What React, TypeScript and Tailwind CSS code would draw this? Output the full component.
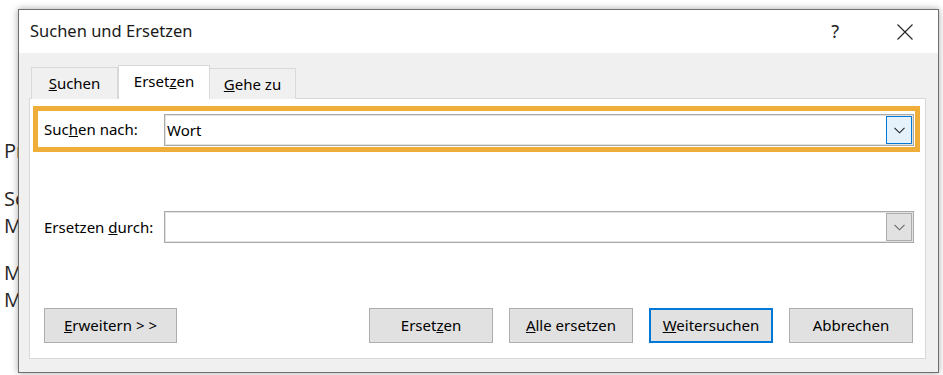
import React from "react"

const ui = { fontFamily: '"Noto Sans", "Open Sans", sans-serif' }

function Chevron({ color = "#333" }: { color?: string }) {
  return (
    <svg width="11" height="7" viewBox="0 0 11 7" fill="none">
      <path d="M0.5 0.8 L5.5 5.8 L10.5 0.8" stroke={color} strokeWidth="1.1" />
    </svg>
  )
}

function Combo({ value, active }: { value?: string; active?: boolean }) {
  return (
    <div className="flex h-[32px] w-[750px] items-center border border-[#a9a9a9] bg-white pl-[2px] pr-[1px] shadow-[inset_0_0_0_1px_#e3e3e3]">
      <span className="flex-1 text-[15px] text-black">{value}</span>
      <div
        className={
          active
            ? "flex h-[28px] w-[26px] items-center justify-center border border-[#0078d7] bg-[#e5f1fb]"
            : "flex h-[28px] w-[26px] items-center justify-center border border-[#adadad] bg-[#e1e1e1]"
        }
      >
        <Chevron color={active ? "#222" : "#666"} />
      </div>
    </div>
  )
}

function Btn({ children, w = "w-[124px]", primary }: { children: React.ReactNode; w?: string; primary?: boolean }) {
  return (
    <div
      className={
        "flex h-[35px] items-center justify-center bg-[#e1e1e1] text-[15px] text-black " +
        w +
        (primary ? " border-2 border-[#0078d7]" : " border border-[#adadad]")
      }
    >
      {children}
    </div>
  )
}

export default function App() {
  return (
    <div className="relative h-[375px] w-[943px] overflow-hidden bg-white">
      {/* document behind the dialog */}
      <div className="pl-[4px] pt-[137px] text-[20px] leading-[27px] text-[#262626]" style={{ fontFamily: '"Open Sans", sans-serif' }}>
        <p>Projektplanung für das nächste Quartal</p>
        <p className="mt-[21px]">Schreiben Sie hier Ihren Text</p>
        <p>Mit dem Wort können Sie suchen</p>
        <p className="mt-[20px]">Markieren Sie das Wort</p>
        <p>Mehr Text im Dokument</p>
      </div>

      {/* dialog window */}
      <div
        className="absolute left-[18px] top-[9px] flex h-[364px] w-[921px] flex-col border border-[#6f6f6f] bg-[#f0f0f0] shadow-[0_0_7px_rgba(0,0,0,0.35)]"
        style={ui}
      >
        <div className="flex h-[43px] items-center bg-white pl-[11px]">
          <span className="flex-1 text-[16.5px] text-[#1a1a1a]">Suchen und Ersetzen</span>
          <span className="mr-[58px] text-[18px] text-[#222]">?</span>
          <svg className="mr-[25px]" width="16" height="16" viewBox="0 0 16 16">
            <path d="M0.5 0.5 L15.5 15.5 M15.5 0.5 L0.5 15.5" stroke="#222" strokeWidth="1.1" />
          </svg>
        </div>

        <div className="flex flex-1 flex-col px-[10px] pt-[13px]">
          {/* tabs */}
          <div className="relative z-10 flex h-[33px] items-end pl-[2px] text-[15px] text-black">
            <div className="flex h-[32px] w-[87px] items-center justify-center border border-b-0 border-[#d9d9d9] bg-[#f0f0f0]">
              <span><u>S</u>uchen</span>
            </div>
            <div className="flex h-[34px] w-[92px] items-center justify-center border border-b-0 border-[#d9d9d9] bg-white pb-[2px]">
              <span>Erset<u>z</u>en</span>
            </div>
            <div className="flex h-[31px] w-[86px] items-center justify-center border border-b-0 border-l-0 border-[#d9d9d9] bg-[#f0f0f0]">
              <span><u>G</u>ehe zu</span>
            </div>
          </div>

          {/* panel */}
          <div className="-mt-px flex h-[261px] w-[897px] flex-col border border-[#d9d9d9] bg-white text-[15px] text-black">
            <div className="ml-[3px] mt-[7px] flex h-[46px] w-[887px] items-center border-[5px] border-[#efae3a] pl-[6px]">
              <span className="w-[120px] whitespace-nowrap">Suc<u>h</u>en nach:</span>
              <div className="pt-[2px]">
                <Combo value="Wort" active />
              </div>
            </div>

            <div className="ml-[8px] mt-[59px] flex items-center pl-[6px]">
              <span className="w-[120px] whitespace-nowrap">Ersetzen <u>d</u>urch:</span>
              <Combo />
            </div>

            <div className="ml-[14px] mt-[65px] flex items-center gap-[16px] pr-[12px]">
              <Btn w="w-[133px]">
                <span><u>E</u>rweitern &gt; &gt;</span>
              </Btn>
              <div className="flex-1" />
              <Btn>
                <span>Erset<u>z</u>en</span>
              </Btn>
              <Btn>
                <span><u>A</u>lle ersetzen</span>
              </Btn>
              <Btn primary>
                <span><u>W</u>eitersuchen</span>
              </Btn>
              <Btn>
                <span>Abbrechen</span>
              </Btn>
            </div>
          </div>
        </div>
      </div>
    </div>
  )
}
